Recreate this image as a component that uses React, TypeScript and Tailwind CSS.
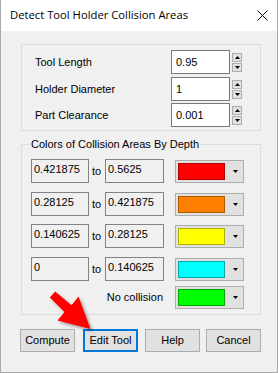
import React from "react";

const SpinArrow = ({ up }: { up?: boolean }) => (
  <svg width="5" height="3" viewBox="0 0 5 3">
    <path d={up ? "M2.5 0L5 3H0z" : "M0 0H5L2.5 3z"} fill="#000" />
  </svg>
);

const Spinner = () => (
  <div className="flex flex-col gap-[1px] mt-[3px] ml-[2px]">
    <div className="w-[10px] h-[9px] bg-[#e1e1e1] border border-[#adadad] flex items-center justify-center">
      <SpinArrow up />
    </div>
    <div className="w-[10px] h-[9px] bg-[#e1e1e1] border border-[#adadad] flex items-center justify-center">
      <SpinArrow />
    </div>
  </div>
);

const Field = ({ label, value, mt }: { label: string; value: string; mt: string }) => (
  <div className={`flex items-start ${mt}`}>
    <span className="w-[136px] h-[24px] flex items-center">{label}</span>
    <div className="w-[59px] h-[24px] bg-white border border-[#7a7a7a] flex items-center pl-[4px]">{value}</div>
    <Spinner />
  </div>
);

const ColorCombo = ({ fill, edge }: { fill: string; edge: string }) => (
  <div className="w-[69px] h-[23px] bg-[#e1e1e1] border border-[#adadad] flex items-center">
    <div className={`w-[47px] h-[17px] ml-[2px] border ${fill} ${edge}`} />
    <div className="ml-[8px]">
      <SpinArrow />
    </div>
  </div>
);

const ValueBox = ({ value, w }: { value: string; w: string }) => (
  <div className={`${w} h-[24px] bg-[#f0f0f0] border border-[#838383] pl-[2px] pt-[2px] leading-[14px]`}>{value}</div>
);

const DepthRow = ({ from, to, fill, edge, mt }: { from: string; to: string; fill: string; edge: string; mt: string }) => (
  <div className={`flex items-start ${mt}`}>
    <ValueBox value={from} w="w-[58px]" />
    <span className="w-[16px] pl-[3px] pt-[5px] leading-[14px]">to</span>
    <ValueBox value={to} w="w-[59px]" />
    <div className="ml-[11px] mt-[1px]">
      <ColorCombo fill={fill} edge={edge} />
    </div>
  </div>
);

const Btn = ({ text, ml, focus }: { text: string; ml: string; focus?: boolean }) => (
  <button
    className={`${ml} w-[55px] h-[23px] bg-[#e1e1e1] flex items-center justify-center ${
      focus ? "border-2 border-[#0078d7]" : "border border-[#adadad]"
    }`}
  >
    {text}
  </button>
);

export default function App() {
  return (
    <div className="relative w-[278px] h-[373px] bg-[#f0f0f0] border-x border-b border-[#aaaaaa] font-['Liberation_Sans',Arial,sans-serif] text-[11px] text-black overflow-hidden">
      {/* title bar */}
      <div className="h-[31px] bg-white flex items-center justify-between pl-[9px] pr-[9px]">
        <span className="text-[11.25px] font-['Open_Sans','Liberation_Sans',sans-serif]">Detect Tool Holder Collision Areas</span>
        <svg width="11" height="11" viewBox="0 0 11 11">
          <path d="M0.5 0.5L10.5 10.5M10.5 0.5L0.5 10.5" stroke="#000" strokeWidth="1" />
        </svg>
      </div>

      {/* tool parameters */}
      <div className="ml-[20px] mt-[13px] w-[240px] h-[87px] border border-[#dcdcdc] pl-[13px] pt-[5px]">
        <Field label="Tool Length" value="0.95" mt="" />
        <Field label="Holder Diameter" value="1" mt="mt-[3px]" />
        <Field label="Part Clearance" value="0.001" mt="mt-[2px]" />
      </div>

      {/* colors group */}
      <div className="relative ml-[20px] mt-[13px] w-[240px] h-[171px] border border-[#dcdcdc] pl-[9px] pt-[14px]">
        <span className="absolute left-[8px] -top-[8px] px-[1px] bg-[#f0f0f0] leading-[14px]">
          Colors of Collision Areas By Depth
        </span>
        <DepthRow from="0.421875" to="0.5625" fill="bg-[#ff0000]" edge="border-[#b00000]" mt="" />
        <DepthRow from="0.28125" to="0.421875" fill="bg-[#ff8000]" edge="border-[#b05800]" mt="mt-[9px]" />
        <DepthRow from="0.140625" to="0.28125" fill="bg-[#ffff00]" edge="border-[#b0b000]" mt="mt-[8px]" />
        <DepthRow from="0" to="0.140625" fill="bg-[#00ffff]" edge="border-[#00a8a8]" mt="mt-[9px]" />
        <div className="flex items-center mt-[5px]">
          <span className="w-[132px] text-right">No collision</span>
          <div className="ml-[12px]">
            <ColorCombo fill="bg-[#00ff00]" edge="border-[#00a800]" />
          </div>
        </div>
      </div>

      {/* buttons */}
      <div className="flex mt-[14px]">
        <Btn text="Compute" ml="ml-[19px]" />
        <Btn text="Edit Tool" ml="ml-[8px]" focus />
        <Btn text="Help" ml="ml-[7px]" />
        <Btn text="Cancel" ml="ml-[6px]" />
      </div>

      {/* red pointer arrow */}
      <svg className="absolute left-0 top-0 pointer-events-none" width="278" height="373" viewBox="0 0 278 373">
        <defs>
          <filter id="sh" x="-20%" y="-20%" width="160%" height="160%">
            <feDropShadow dx="2" dy="2" stdDeviation="1.5" floodColor="#000" floodOpacity="0.35" />
          </filter>
        </defs>
        <polygon
          points="54.2,291.6 70.5,305.2 77.5,296.5 89.5,329 56.5,320.5 63.5,312 48.8,297.4"
          fill="#ff0000"
          filter="url(#sh)"
        />
      </svg>
    </div>
  );
}
